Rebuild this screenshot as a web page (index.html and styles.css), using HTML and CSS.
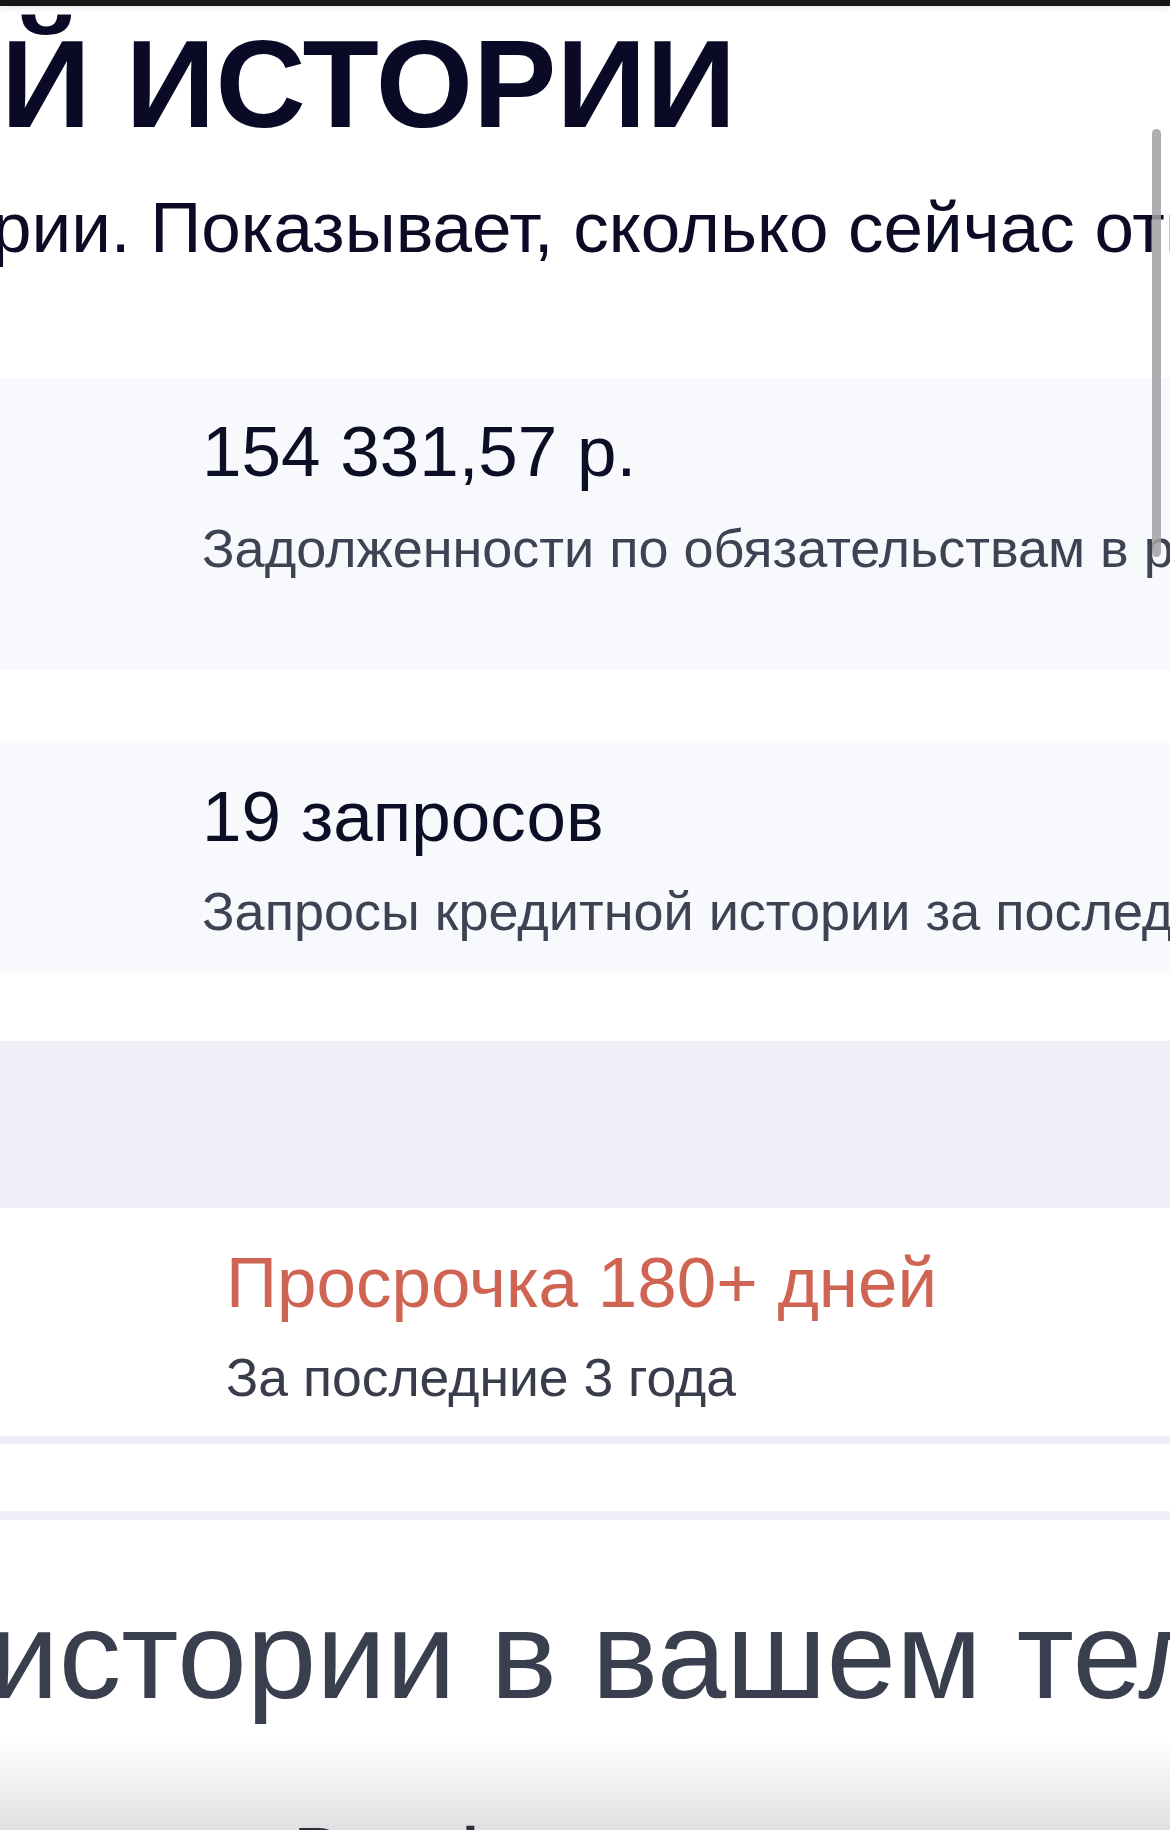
FILE: index.html
```html
<!DOCTYPE html>
<html lang="ru">
<head>
<meta charset="utf-8">
<title>Кредитная история</title>
<link rel="stylesheet" href="styles.css">
</head>
<body>
<div class="page">
  <div class="topbar"></div>
  <h1 class="title">Й ИСТОРИИ</h1>
  <p class="subtitle">рии. Показывает, сколько сейчас открытых кредитов</p>

  <section class="card card-debt">
    <div class="card-value">154 331,57 р.</div>
    <div class="card-desc">Задолженности по обязательствам в рублях</div>
  </section>

  <section class="card card-requests">
    <div class="card-value">19 запросов</div>
    <div class="card-desc card-desc-2">Запросы кредитной истории за последние 12 месяцев</div>
  </section>

  <div class="band"></div>
  <section class="overdue">
    <div class="overdue-title">Просрочка 180+ дней</div>
    <div class="overdue-desc">За последние 3 года</div>
  </section>
  <div class="gap-block"></div>

  <h2 class="bottom-heading">истории в вашем телефоне</h2>

  <div class="sheet-fade">
    <div class="sheet-text">Ваш фактор риска</div>
  </div>
  <div class="scrollbar"></div>
</div>
</body>
</html>
```

FILE: styles.css
```css
html, body {
  margin: 0;
  padding: 0;
  background: #ffffff;
}
body {
  width: 1170px;
  height: 1830px;
  overflow: hidden;
  font-family: "Liberation Sans", Arial, sans-serif;
}
.page {
  position: relative;
  width: 1170px;
  height: 1830px;
  overflow: hidden;
  white-space: nowrap;
}
.topbar {
  height: 6px;
  background: #161616;
  box-shadow: 0 2px 6px rgba(0, 0, 0, 0.10);
  position: relative;
  z-index: 2;
}
.title {
  margin: 16px 0 0 1px;
  font-size: 125px;
  line-height: 124px;
  font-weight: 700;
  color: #0a0a26;
}
.subtitle {
  margin: 46px 0 0 -8px;
  font-size: 71px;
  line-height: 72px;
  font-weight: 400;
  color: #0b0b26;
}
.card {
  background: #f8f9fd;
  padding-left: 202px;
  overflow: hidden;
  box-sizing: border-box;
  padding-top: 38px;
}
.card-debt {
  margin-top: 114px;
  height: 292px;
}
.card-requests {
  margin-top: 73px;
  height: 229px;
}
.card-value {
  font-size: 71px;
  line-height: 72px;
  color: #0d0d26;
}
.card-desc {
  margin-top: 33px;
  font-size: 54px;
  line-height: 54px;
  color: #3e4252;
}
.card-desc-2 {
  margin-top: 31px;
}
.band {
  margin-top: 69px;
  height: 167px;
  background: #eeeef7;
}
.overdue {
  padding: 40px 0 0 226px;
  height: 188px;
  border-bottom: 8px solid #eeeef6;
}
.overdue-title {
  font-size: 71px;
  line-height: 70px;
  color: #cf6452;
}
.overdue-desc {
  margin-top: 34px;
  font-size: 53.5px;
  line-height: 52px;
  color: #393c4b;
}
.gap-block {
  height: 67px;
  border-bottom: 9px solid #eeeef6;
}
.bottom-heading {
  margin: 72px 0 0 -11px;
  font-size: 125px;
  line-height: 125px;
  font-weight: 400;
  color: #3a3f4f;
}
.sheet-fade {
  position: absolute;
  left: 0;
  right: 0;
  bottom: 0;
  height: 90px;
  background: linear-gradient(to bottom, rgba(225, 225, 228, 0) 0%, rgba(225, 225, 228, 0.55) 55%, rgba(222, 222, 225, 0.95) 100%);
}
.sheet-text {
  position: absolute;
  left: 295px;
  top: 78px;
  font-size: 62px;
  line-height: 62px;
  font-weight: 700;
  color: #2c2f3b;
}
.scrollbar {
  position: absolute;
  top: 129px;
  right: 9px;
  width: 9px;
  height: 428px;
  border-radius: 5px;
  background: rgba(160, 160, 164, 0.85);
}
```
